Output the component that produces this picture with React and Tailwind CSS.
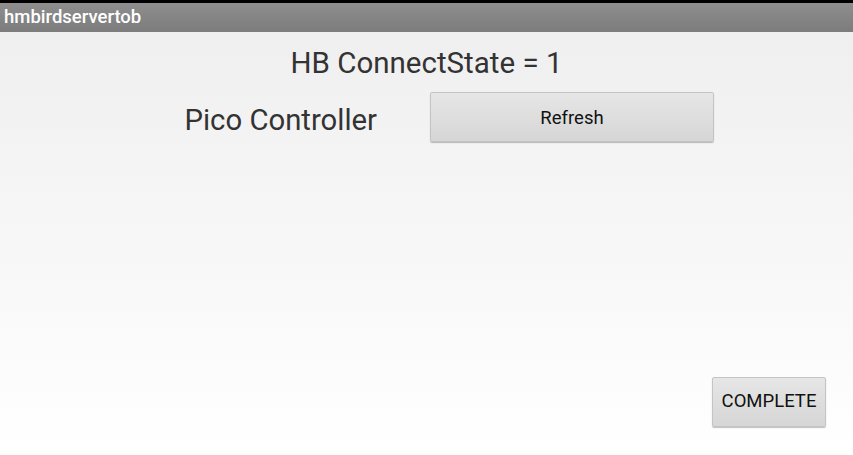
export default function App() {
  return (
    <div
      className="w-[853px] h-[455px] flex flex-col overflow-hidden bg-gradient-to-b from-[#eeeeee] to-[#ffffff]"
      style={{ fontFamily: "Roboto, 'Liberation Sans', sans-serif" }}
    >
      {/* title bar */}
      <div className="h-[32px] border-t-[3px] border-black bg-gradient-to-b from-[#8e8e8e] to-[#7c7c7c] flex items-center pl-[4px]">
        <span className="text-white text-[18.5px] font-medium leading-none">hmbirdservertob</span>
      </div>

      <div className="flex-1 flex flex-col">
        <div className="h-[30px] mt-[17px] flex justify-center items-center">
          <span className="text-[29.5px] text-[#333333] leading-none">HB ConnectState = 1</span>
        </div>

        <div className="flex items-center mt-[13px]">
          <div className="w-[430px] flex justify-end pr-[53px] pt-[7px]">
            <span className="text-[29.3px] text-[#333333] leading-none">Pico Controller</span>
          </div>
          <button className="w-[284px] h-[50px] border border-[#c4c4c4] rounded-[2px] bg-gradient-to-b from-[#e6e6e6] to-[#d6d6d6] shadow-[0_1px_1px_rgba(0,0,0,0.25)] text-[18.5px] text-[#111111] pt-[4px]">
            Refresh
          </button>
        </div>

        <div className="flex-1" />

        <div className="flex justify-end pr-[27px] mb-[28px]">
          <button className="w-[114px] h-[50px] border border-[#c4c4c4] rounded-[2px] bg-gradient-to-b from-[#e6e6e6] to-[#d6d6d6] shadow-[0_1px_1px_rgba(0,0,0,0.25)] text-[18.5px] text-[#111111]">
            COMPLETE
          </button>
        </div>
      </div>
    </div>
  );
}
